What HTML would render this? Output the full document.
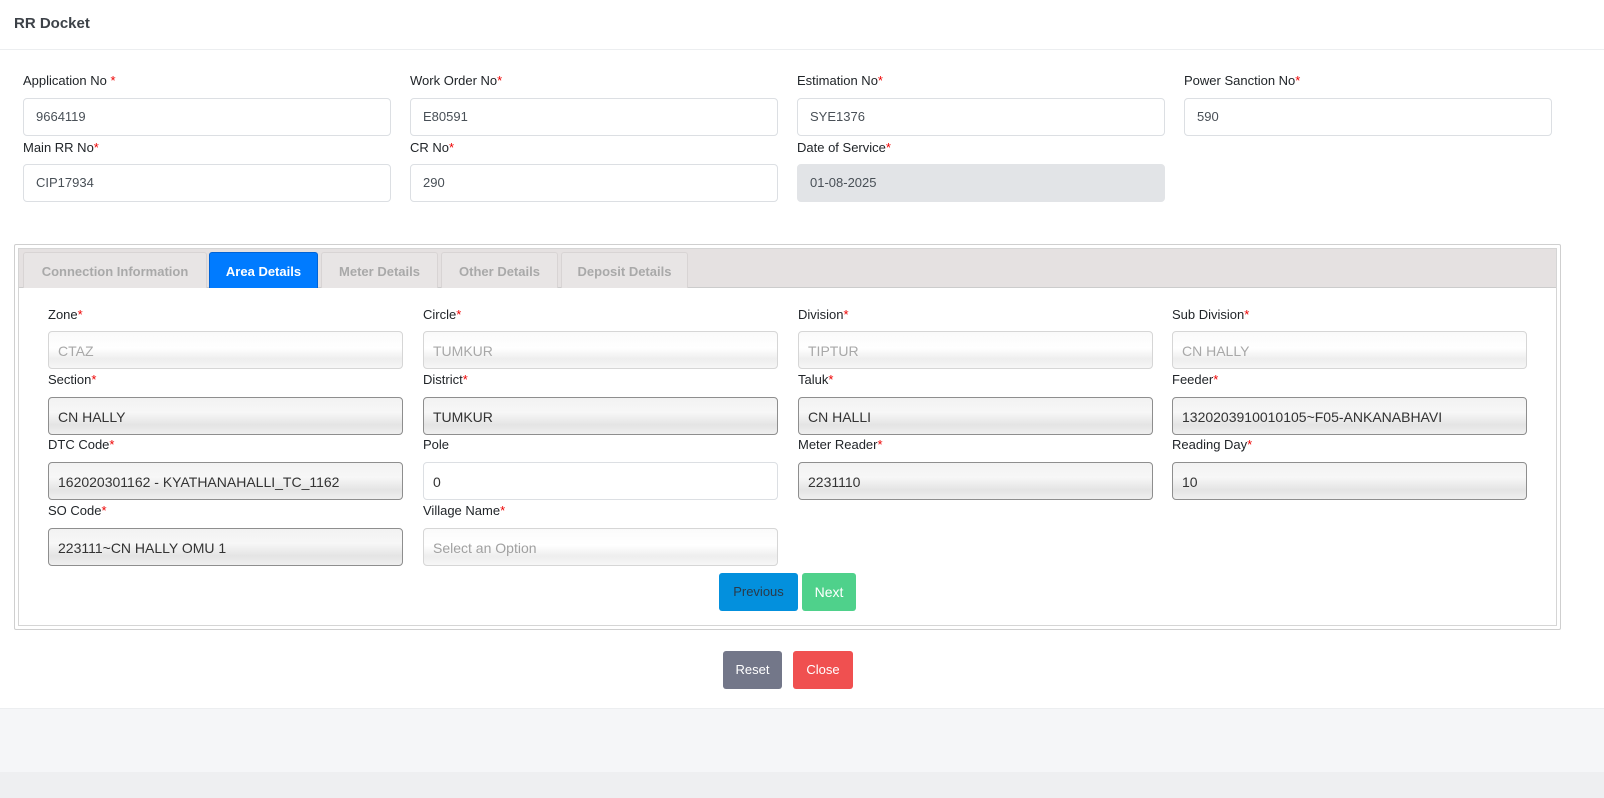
<!DOCTYPE html><html><head><style>
*{box-sizing:border-box;margin:0;padding:0}
body{width:1604px;height:798px;background:#fff;font-family:"Liberation Sans",sans-serif;position:relative;overflow:hidden;color:#212529}
.a{position:absolute}
.h{left:14px;top:15px;font-size:15px;font-weight:bold;color:#3d4248}
.hl{left:0;top:49px;width:1604px;height:1px;background:#eceef0}
.l{position:absolute;font-size:13px;color:#212529}
.l i{color:#e00;font-style:normal}
.in{position:absolute;height:38px;border:1px solid #dcdfe3;border-radius:4px;font-size:13px;color:#495057;padding:10px 12px 0;background:#fff}
.g{background:#e2e4e7}
.d{background:linear-gradient(#fafafa,#fff 45%,#eee 75%,#f6f6f6);border-color:#d6d6d6;color:#a8a8a8;font-size:14px;padding:11px 9px 0}
.r{background:linear-gradient(#f2f2f2,#f7f7f7 40%,#e4e4e4 75%,#efefef);border-color:#8e8e8e;color:#333;font-size:14px;padding:11px 9px 0}
.p{font-size:14px;padding:11px 9px 0;color:#333}
.tab{position:absolute;top:252px;height:36px;border:1px solid #d8d4d4;border-bottom:none;border-radius:3px 3px 0 0;background:#e8e5e5;color:#a9a9a9;font-size:13px;font-weight:bold;text-align:center;line-height:38px}
.btn{position:absolute;height:38px;border-radius:3px;font-size:13px;text-align:center;line-height:38px}
</style></head><body>
<div class="a h">RR Docket</div><div class="a hl"></div>

<div class="l" style="left:23px;top:73px">Application No <i>*</i></div>
<div class="l" style="left:410px;top:73px">Work Order No<i>*</i></div>
<div class="l" style="left:797px;top:73px">Estimation No<i>*</i></div>
<div class="l" style="left:1184px;top:73px">Power Sanction No<i>*</i></div>
<div class="in" style="left:23px;top:98px;width:368px">9664119</div>
<div class="in" style="left:410px;top:98px;width:368px">E80591</div>
<div class="in" style="left:797px;top:98px;width:368px">SYE1376</div>
<div class="in" style="left:1184px;top:98px;width:368px">590</div>
<div class="l" style="left:23px;top:140px">Main RR No<i>*</i></div>
<div class="l" style="left:410px;top:140px">CR No<i>*</i></div>
<div class="l" style="left:797px;top:140px">Date of Service<i>*</i></div>
<div class="in" style="left:23px;top:164px;width:368px">CIP17934</div>
<div class="in" style="left:410px;top:164px;width:368px">290</div>
<div class="in g" style="left:797px;top:164px;width:368px;border-color:#e2e4e7">01-08-2025</div>

<div class="a" style="left:14px;top:244px;width:1547px;height:386px;border:1px solid #cfcfcf;border-radius:2px"></div>
<div class="a" style="left:18px;top:248px;width:1539px;height:378px;border:1px solid #d5d5d5"></div>
<div class="a" style="left:19px;top:249px;width:1537px;height:39px;background:#e5e1e1;border-bottom:1px solid #ccc"></div>
<div class="tab" style="left:23px;width:184px">Connection Information</div>
<div class="tab" style="left:209px;width:109px;background:#007bff;color:#fff;border-color:#0063d6">Area Details</div>
<div class="tab" style="left:321px;width:117px">Meter Details</div>
<div class="tab" style="left:441px;width:117px">Other Details</div>
<div class="tab" style="left:561px;width:127px">Deposit Details</div>

<div class="l" style="left:48px;top:307px">Zone<i>*</i></div>
<div class="l" style="left:423px;top:307px">Circle<i>*</i></div>
<div class="l" style="left:798px;top:307px">Division<i>*</i></div>
<div class="l" style="left:1172px;top:307px">Sub Division<i>*</i></div>
<div class="in d" style="left:48px;top:331px;width:355px">CTAZ</div>
<div class="in d" style="left:423px;top:331px;width:355px">TUMKUR</div>
<div class="in d" style="left:798px;top:331px;width:355px">TIPTUR</div>
<div class="in d" style="left:1172px;top:331px;width:355px">CN HALLY</div>

<div class="l" style="left:48px;top:372px">Section<i>*</i></div>
<div class="l" style="left:423px;top:372px">District<i>*</i></div>
<div class="l" style="left:798px;top:372px">Taluk<i>*</i></div>
<div class="l" style="left:1172px;top:372px">Feeder<i>*</i></div>
<div class="in r" style="left:48px;top:397px;width:355px">CN HALLY</div>
<div class="in r" style="left:423px;top:397px;width:355px">TUMKUR</div>
<div class="in r" style="left:798px;top:397px;width:355px">CN HALLI</div>
<div class="in r" style="left:1172px;top:397px;width:355px">1320203910010105~F05-ANKANABHAVI</div>

<div class="l" style="left:48px;top:437px">DTC Code<i>*</i></div>
<div class="l" style="left:423px;top:437px">Pole</div>
<div class="l" style="left:798px;top:437px">Meter Reader<i>*</i></div>
<div class="l" style="left:1172px;top:437px">Reading Day<i>*</i></div>
<div class="in r" style="left:48px;top:462px;width:355px">162020301162 - KYATHANAHALLI_TC_1162</div>
<div class="in p" style="left:423px;top:462px;width:355px">0</div>
<div class="in r" style="left:798px;top:462px;width:355px">2231110</div>
<div class="in r" style="left:1172px;top:462px;width:355px">10</div>

<div class="l" style="left:48px;top:503px">SO Code<i>*</i></div>
<div class="l" style="left:423px;top:503px">Village Name<i>*</i></div>
<div class="in r" style="left:48px;top:528px;width:355px">223111~CN HALLY OMU 1</div>
<div class="in d" style="left:423px;top:528px;width:355px;color:#a0a0a0">Select an Option</div>

<div class="btn" style="left:719px;top:573px;width:79px;background:#0390dd;color:#2a3a4a">Previous</div>
<div class="btn" style="left:802px;top:573px;width:54px;background:#4fd18b;color:#fff;font-size:14px">Next</div>

<div class="btn" style="left:723px;top:651px;width:59px;background:#737789;color:#fff">Reset</div>
<div class="btn" style="left:793px;top:651px;width:60px;background:#f05050;color:#fff">Close</div>

<div class="a" style="left:0;top:708px;width:1604px;height:90px;background:#f5f6f8;border-top:1px solid #eceef0"></div>
<div class="a" style="left:0;top:772px;width:1604px;height:26px;background:#eeeff1"></div>
</body></html>
